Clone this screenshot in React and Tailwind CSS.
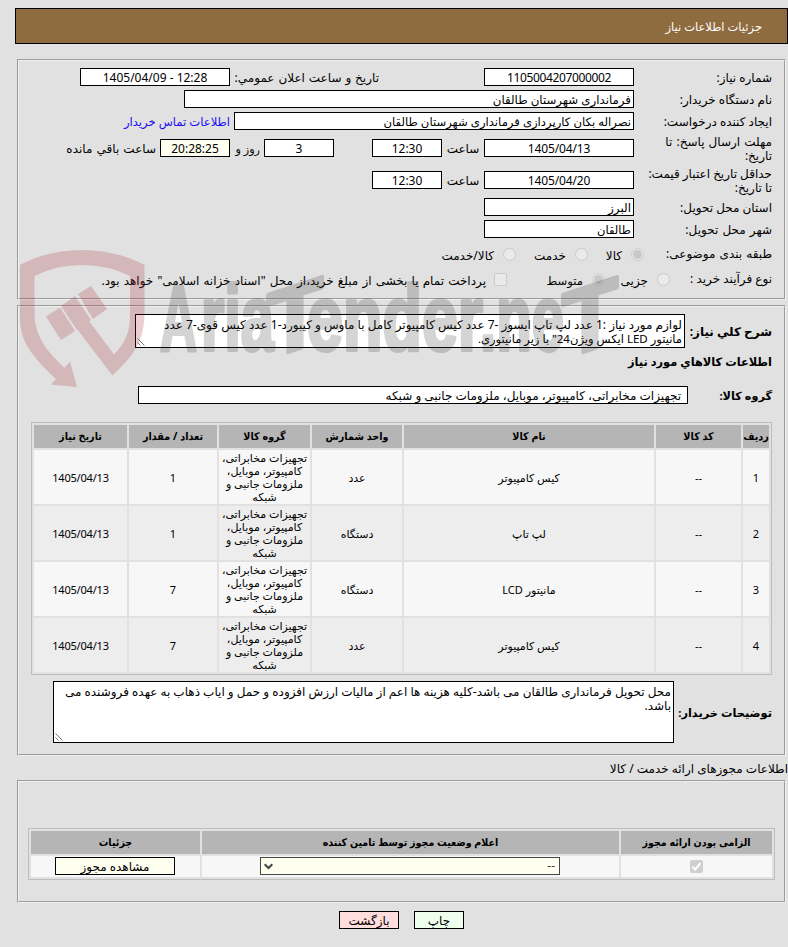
import clsx from "clsx";

const GROUP = ["تجهیزات مخابراتی،", "کامپیوتر، موبایل،", "ملزومات جانبی و", "شبکه"];

const items = [
  { id: 1, name: "کیس کامپیوتر", unit: "عدد", qty: 1 },
  { id: 2, name: "لپ تاپ", unit: "دستگاه", qty: 1 },
  { id: 3, name: "مانیتور LCD", unit: "دستگاه", qty: 7 },
  { id: 4, name: "کیس کامپیوتر", unit: "عدد", qty: 7 },
];

const itemHeads = ["ردیف", "کد کالا", "نام کالا", "واحد شمارش", "گروه کالا", "تعداد / مقدار", "تاریخ نیاز"];

// text, left edge, width
const brand = [
  ["A", 160, 37],
  ["ria", 201, 73],
  ["ender", 307, 176],
  [".ne", 480, 84],
];

function Field({ className, center, children }) {
  return (
    <div
      className={clsx(
        "h-[18px] shrink-0 border border-black whitespace-nowrap leading-[17px]",
        center ? "text-center" : "text-right pr-[2px]",
        className
      )}
    >
      {children}
    </div>
  );
}

function Label({ children, className }) {
  return <div className={clsx("w-[138px] shrink-0 whitespace-nowrap", className)}>{children}</div>;
}

function Radio({ checked, className }) {
  return (
    <span
      className={clsx(
        "size-[13px] shrink-0 rounded-full border border-[#cbcbcb] bg-[#eaeaea] flex items-center justify-center",
        className
      )}
    >
      {checked && <span className="size-[9px] rounded-full bg-[#c8c8c8]" />}
    </span>
  );
}

function Panel({ className, children }) {
  return (
    <div className={clsx("mr-[2px] ml-[17px] border-2 border-[#f0f0f0] [border-style:groove]", className)}>
      {children}
    </div>
  );
}

function Grip() {
  return (
    <svg className="absolute bottom-px left-px" width="8" height="8" viewBox="0 0 8 8" stroke="#555" strokeWidth="0.8">
      <path d="M0.5 0.5L7.5 7.5M0.5 4.5L3.5 7.5" />
    </svg>
  );
}

function Watermark() {
  return (
    <svg className="absolute top-0 left-0 pointer-events-none" width="788" height="947" viewBox="0 0 788 947">
      <g fill="#a0141e" opacity="0.2">
        <path d="M20 265Q48 250 82 250Q116 250 144.500 265V313C144.500 343 131 358 112.500 375.500L77 329L89 321L114 354.500C124 344 130 334 130 315V276Q108 265 82 265Q56 265 34.500 276V313C34.500 337 48 352 64.500 368L70 361.500L77 387L51 384.500L56 379C34 358 20 343 20 318Z" />
        <path d="M46 316.500L60 307.500L75 331L61 340Z" />
        <path d="M61 306L75 296L91 320L77 330Z" />
        <path d="M78 294L91 286L107 309L93 319Z" />
      </g>
      <g
        fill="#2d2d2d"
        stroke="#2d2d2d"
        strokeWidth="4"
        strokeLinejoin="round"
        opacity="0.2"
        direction="ltr"
        className="text-[93px] font-bold [font-family:'Liberation_Sans',sans-serif]"
      >
        {brand.map(([text, x, w]) => (
          <text key={x} x={x} y="350" textLength={w} lengthAdjust="spacingAndGlyphs">
            {text}
          </text>
        ))}
        <text transform="translate(267 359) skewY(-18)" textLength="56" lengthAdjust="spacingAndGlyphs">
          T
        </text>
        <text transform="translate(562 359) skewY(-18)" textLength="56" lengthAdjust="spacingAndGlyphs">
          T
        </text>
      </g>
    </svg>
  );
}

export default function App() {
  return (
    <div
      dir="rtl"
      className="relative h-[947px] w-[788px] overflow-hidden bg-[#e1e1e1] pt-2 text-[12px] leading-[14px] text-black [font-family:'Noto_Sans','DejaVu_Sans',sans-serif]"
    >
      <div className="ml-[15px] h-9 border border-black bg-[#8f6c40] pr-[25px] text-[11.5px] leading-[35px] text-white">
        جزئیات اطلاعات نیاز
      </div>

      <Panel className="mt-[15px] h-[241px] pt-[7px] pr-3">
        <div className="flex h-[22px]">
          <Label className="pt-[3px]">شماره نیاز:</Label>
          <Field center className="w-[150px] bg-white tracking-[-0.35px]">1105004207000002</Field>
          <div className="mr-[105px] w-[149px] shrink-0 pt-[3px] whitespace-nowrap [word-spacing:0.8px]">
            تاریخ و ساعت اعلان عمومي:
          </div>
          <Field center className="w-[150px] bg-white">
            <span dir="ltr">1405/04/09 - 12:28</span>
          </Field>
        </div>
        <div className="flex h-[22px]">
          <Label className="pt-[3px]">نام دستگاه خریدار:</Label>
          <Field className="w-[450px] bg-white text-[11.8px]">فرمانداری شهرستان طالقان</Field>
        </div>
        <div className="flex h-[22px]">
          <Label className="pt-[3px]">ایجاد کننده درخواست:</Label>
          <Field className="w-[400px] bg-white text-[11.65px]">نصراله بکان کارپردازی فرمانداری شهرستان طالقان</Field>
          <a className="mr-1 pt-[3px] text-[11.6px] whitespace-nowrap text-[#1a0df5]">اطلاعات تماس خریدار</a>
        </div>
        <div className="flex h-8 pt-[5px]">
          <Label className="-mt-1 [word-spacing:1px]">
            مهلت ارسال پاسخ: تا
            <br />
            تاریخ:
          </Label>
          <Field center className="w-[150px] bg-white tracking-[-0.15px]">1405/04/13</Field>
          <div className="w-[42px] pt-[3px] text-center">ساعت</div>
          <Field center className="w-[70px] bg-white">12:30</Field>
          <Field center className="mr-[38px] w-[70px] bg-white">3</Field>
          <div className="w-[34px] pt-[3px] pr-1 text-[11.2px] whitespace-nowrap">روز و</div>
          <Field center className="w-[70px] bg-[#fffff0]">20:28:25</Field>
          <div className="mr-1 pt-[3px] whitespace-nowrap [word-spacing:1px]">ساعت باقي مانده</div>
        </div>
        <div className="flex h-8 pt-[5px]">
          <Label className="-mt-1">
            حداقل تاریخ اعتبار قیمت:
            <br />
            تا تاریخ:
          </Label>
          <Field center className="w-[150px] bg-white tracking-[-0.15px]">1405/04/20</Field>
          <div className="w-[42px] pt-[3px] text-center">ساعت</div>
          <Field center className="w-[70px] bg-white">12:30</Field>
        </div>
        <div className="flex h-[22px]">
          <Label className="pt-[3px]">استان محل تحویل:</Label>
          <Field className="w-[150px] bg-white">البرز</Field>
        </div>
        <div className="flex h-[22px]">
          <Label className="pt-[3px] [word-spacing:1px]">شهر محل تحویل:</Label>
          <Field className="w-[150px] bg-white text-[11.5px]">طالقان</Field>
        </div>
        <div className="flex h-6 items-center">
          <div className="w-[128px] shrink-0 whitespace-nowrap [word-spacing:1px]">طبقه بندی موضوعی:</div>
          <Radio checked />
          <div className="w-[43px] pt-[3px] pr-[9px]">کالا</div>
          <Radio />
          <div className="w-[59px] pt-[3px] pr-[9px]">خدمت</div>
          <Radio />
          <div className="pt-[3px] pr-[9px] whitespace-nowrap">کالا/خدمت</div>
        </div>
        <div className="flex h-[26px] items-center">
          <div className="w-[102px] shrink-0 whitespace-nowrap">نوع فرآیند خرید :</div>
          <Radio />
          <div className="w-[52px] shrink-0 pt-[3px] pr-[9px]">جزیی</div>
          <Radio checked />
          <div className="w-[85px] shrink-0 pt-[3px] pr-[9px] text-[11.6px]">متوسط</div>
          <span className="size-[13px] shrink-0 rounded-[2px] border border-[#cbcbcb] bg-[#eaeaea]" />
          <div className="pt-[3px] pr-2 whitespace-nowrap [word-spacing:1px]">
            پرداخت تمام یا بخشی از مبلغ خرید،از محل "اسناد خزانه اسلامی" خواهد بود.
          </div>
        </div>
      </Panel>

      <Panel className="mt-[5px] h-[451px] pt-[7px]">
        <div className="flex h-[34px] pr-3">
          <div className="w-[87px] shrink-0 pt-[11px] font-bold whitespace-nowrap">شرح کلي نیاز:</div>
          <div className="relative w-[550px] shrink-0 border border-black bg-white pt-[3px] pr-[2px] whitespace-nowrap">
            لوازم مورد نیاز :1 عدد لپ تاپ ایسوز -7 عدد کیس کامپیوتر کامل با ماوس و کیبورد-1 عدد کیس قوی-7 عدد
            <br />
            <span className="text-[11.5px]">مانیتور LED ایکس ویژن24" با زیر مانیتوری.</span>
            <Grip />
          </div>
        </div>
        <div className="pt-[7px] pr-3 text-[11.4px] font-bold">اطلاعات کالاهاي مورد نیاز</div>
        <div className="mt-[17px] flex h-[36px] pr-3">
          <div className="w-[84px] shrink-0 pt-[3px] text-[11.3px] font-bold">گروه کالا:</div>
          <Field className="w-[550px] bg-white !pr-[6px]">
            تجهیزات مخابراتی، کامپیوتر، موبایل، ملزومات جانبی و شبکه
          </Field>
        </div>

        <div className="mr-3 grid w-[741px] grid-cols-[26px_85px_250px_90px_91px_88px_93px] grid-rows-[23px_repeat(4,54px)] gap-[2px] border border-[#bdbdbd] p-[2px] text-center text-[11px] leading-[13px]">
          {itemHeads.map((h) => (
            <div
              key={h}
              className="bg-[#b5b5b5] text-[10.7px] leading-[23px] font-bold whitespace-nowrap [font-family:'Noto_Sans','DejaVu_Sans_Condensed',sans-serif]"
            >
              {h}
            </div>
          ))}
          {items.map((it) =>
            [it.id, "--", it.name, it.unit, GROUP, it.qty, "1405/04/13"].map((cell, i) => (
              <div
                key={it.id + "-" + i}
                className={clsx(
                  "flex flex-col items-center justify-center whitespace-nowrap",
                  i === 6 && "tracking-[-0.2px]",
                  it.id % 2 ? "bg-[#f7f7f7]" : "bg-[#ededed]"
                )}
              >
                {Array.isArray(cell) ? cell.map((line) => <div key={line}>{line}</div>) : <div>{cell}</div>}
              </div>
            ))
          )}
        </div>

        <div className="mt-[6px] flex h-[62px] pr-3">
          <div className="w-[98px] shrink-0 pt-[25px] text-[11.4px] font-bold whitespace-nowrap">توضیحات خریدار:</div>
          <div className="relative w-[621px] shrink-0 border border-black bg-white pt-[3px] pr-[2px] whitespace-nowrap">
            محل تحویل فرمانداری طالقان می باشد-کلیه هزینه ها اعم از مالیات ارزش افزوده و حمل و ایاب ذهاب به عهده فروشنده می
            <br />
            باشد.
            <Grip />
          </div>
        </div>
      </Panel>

      <div className="h-6 pt-[6px]">اطلاعات مجوزهای ارائه خدمت / کالا</div>

      <Panel className="h-[123px] pt-[46px] pr-[9px]">
        <div className="grid w-[747px] grid-cols-[151px_417px_169px] grid-rows-[23px_21px] gap-[2px] border border-[#bdbdbd] p-[2px] text-center">
          {["الزامی بودن ارائه مجوز", "اعلام وضعیت مجوز توسط تامین کننده", "جزئیات"].map((h) => (
            <div
              key={h}
              className="bg-[#b5b5b5] text-[10.6px] leading-[22px] font-bold whitespace-nowrap [font-family:'Noto_Sans','DejaVu_Sans_Condensed',sans-serif]"
            >
              {h}
            </div>
          ))}
          <div className="flex items-center justify-center bg-[#f7f7f7]">
            <span className="flex size-[13px] items-center justify-center rounded-[2px] bg-[#cfcfcf]">
              <svg width="11" height="11" viewBox="0 0 11 11" fill="none" stroke="#fff" strokeWidth="2">
                <path d="M1.500 5.800L4.200 8.500L9.500 2.200" />
              </svg>
            </span>
          </div>
          <div className="bg-[#f7f7f7] pt-px pr-[59px]">
            <div className="flex h-[18px] w-[300px] items-center justify-between border border-[#484848] bg-[#fffff0] pr-1 pl-[3px] text-[#444]">
              <span>--</span>
              <svg width="9" height="7" viewBox="0 0 9 7" fill="none" stroke="#444" strokeWidth="2">
                <path d="M0.700 1.200L4.500 5L8.300 1.200" />
              </svg>
            </div>
          </div>
          <div className="bg-[#f7f7f7] pt-px pr-[25px]">
            <Field center className="w-[120px] bg-[#fffff0]">مشاهده مجوز</Field>
          </div>
        </div>
      </Panel>

      <div className="mt-2 flex gap-[15px] pr-[324px]">
        <Field center className="w-[50px] bg-[#eeffee]">چاپ</Field>
        <Field center className="w-[60px] bg-[#ffdddd]">بازگشت</Field>
      </div>

      <Watermark />
    </div>
  );
}
